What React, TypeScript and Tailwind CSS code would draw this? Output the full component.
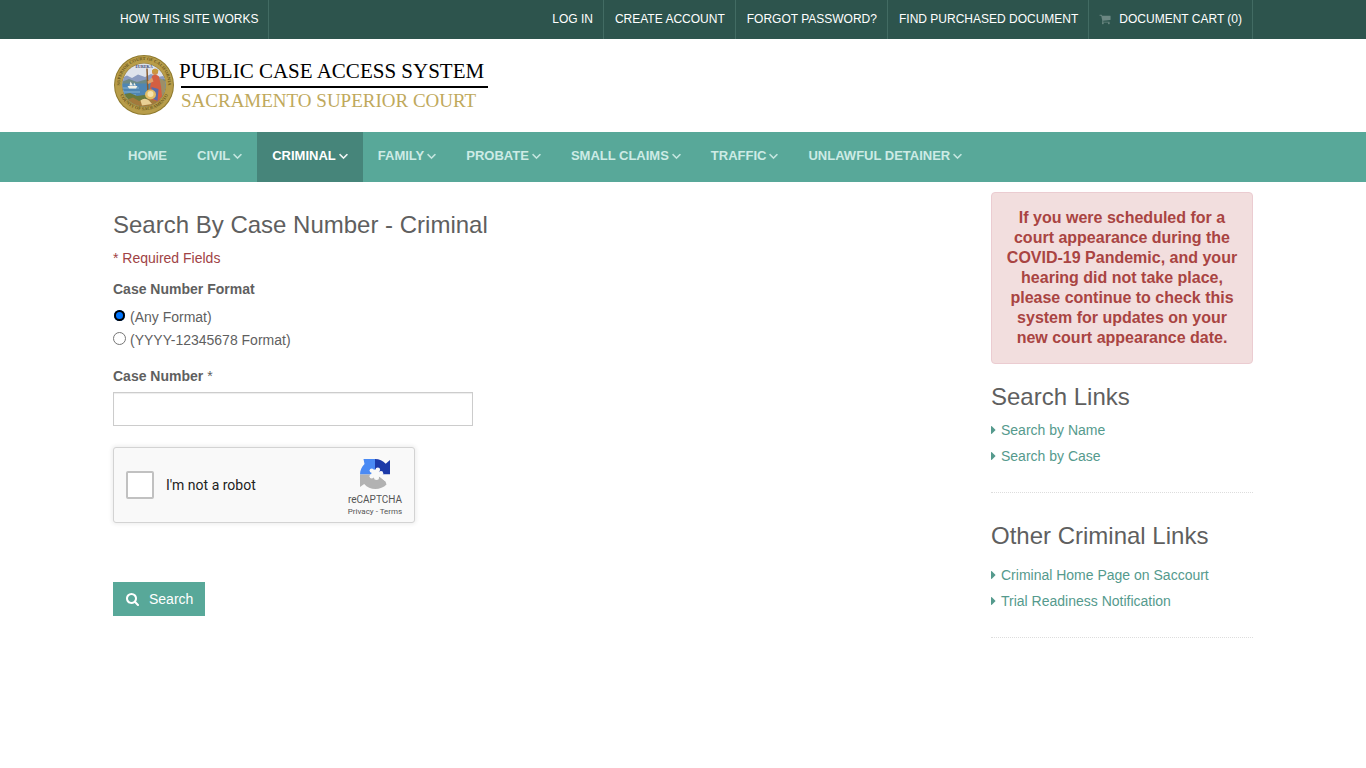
import { useState } from "react";
import { clsx } from "clsx";

const accountLinks = ["LOG IN", "CREATE ACCOUNT", "FORGOT PASSWORD?", "FIND PURCHASED DOCUMENT"];

const navItems = [
  { label: "HOME", menu: false },
  { label: "CIVIL", menu: true },
  { label: "CRIMINAL", menu: true, active: true },
  { label: "FAMILY", menu: true },
  { label: "PROBATE", menu: true },
  { label: "SMALL CLAIMS", menu: true },
  { label: "TRAFFIC", menu: true },
  { label: "UNLAWFUL DETAINER", menu: true },
];

const formats = [
  { id: "any", label: "(Any Format)" },
  { id: "year", label: "(YYYY-12345678 Format)" },
];

const iconPaths = {
  cart: "M704 1536q0 52-38 90t-90 38-90-38-38-90 38-90 90-38 90 38 38 90zm896 0q0 52-38 90t-90 38-90-38-38-90 38-90 90-38 90 38 38 90zm128-1088v512q0 24-16.5 42.5t-40.5 21.5l-1044 122q13 60 13 70 0 16-24 64h920q26 0 45 19t19 45-19 45-45 19h-1024q-26 0-45-19t-19-45q0-11 8-31.5t16-36 21.5-40 15.5-29.5l-177-823h-204q-26 0-45-19t-19-45 19-45 45-19h256q16 0 28.5 6.5t19.5 15.5 13 24.5 8 26 5.5 29.5 4.5 26h1201q26 0 45 19t19 45z",
  search:
    "M1152 832q0-185-131.5-316.5t-316.5-131.5-316.5 131.5-131.5 316.5 131.5 316.5 316.5 131.5 316.5-131.5 131.5-316.5zm512 832q0 52-38 90t-90 38q-54 0-90-38l-343-342q-179 124-399 124-143 0-273.5-55.5t-225-150-150-225-55.5-273.5 55.5-273.5 150-225 225-150 273.5-55.5 273.5 55.5 225 150 150 225 55.5 273.5q0 220-124 399l343 343q37 37 37 90z",
  angleDown:
    "M1395 736q0 13-10 23l-466 466q-10 10-23 10t-23-10l-466-466q-10-10-10-23t10-23l50-50q10-10 23-10t23 10l393 393 393-393q10-10 23-10t23 10l50 50q10 10 10 23z",
  caretRight: "M1152 896q0 26-19 45l-448 448q-19 19-45 19t-45-19-19-45v-896q0-26 19-45t45-19 45 19l448 448q19 19 19 45z",
};

function Icon({
  name,
  className,
  viewBox = "0 0 1792 1792",
}: {
  name: keyof typeof iconPaths;
  className?: string;
  viewBox?: string;
}) {
  return (
    <svg viewBox={viewBox} className={clsx("flex-none", className)} fill="currentColor" aria-hidden="true">
      <path d={iconPaths[name]} />
    </svg>
  );
}

function CourtSeal() {
  return (
    <svg viewBox="0 0 120 120" className="size-[60px] flex-none" role="img" aria-label="Court seal">
      <defs>
        <clipPath id="seal-scene">
          <circle cx="60" cy="60" r="43" />
        </clipPath>
        <path id="seal-top" d="M13 68A48 48 0 1 1 107 68" />
        <path id="seal-bottom" d="M9 72A53 53 0 0 0 111 72" />
      </defs>
      <circle cx="60" cy="60" r="60" fill="#8f7a2e" />
      <circle cx="60" cy="60" r="58" fill="#b89d4a" />
      <circle cx="60" cy="60" r="44" fill="#8d7a3c" />
      <g clipPath="url(#seal-scene)">
        <rect x="10" y="10" width="100" height="100" fill="#dfe3ec" />
        <path d="M14 46l12-5 10 5 12-7 14 5 12-6 14 6 20-4v25H14z" fill="#8b9bc0" />
        <path d="M12 55l18-7 16 6 18-5 18 4 26-7v20H12z" fill="#6d8a86" />
        <rect x="10" y="57" width="100" height="28" fill="#4f86b3" />
        <path d="M10 66h40M16 74h36M20 80h24" stroke="#86b2d0" strokeWidth="2" />
        <path d="M27 62h20l-3 5H30zM33 53l5 8h-7zM40 55l4 6h-5z" fill="#f3f1e6" />
        <path d="M14 80l18-4 14 6 14-2 20-4 28 2v32H14z" fill="#6a7a3c" />
        <path d="M26 90l12-5 12 7 14-4 30 2-12 16H38z" fill="#a37a3b" />
        <path d="M91 46l14 8v34l-14-6z" fill="#9c8f68" />
        <path d="M66 27l2 54" stroke="#8a5a2c" strokeWidth="3" />
        <circle cx="82" cy="34" r="6" fill="#d08d48" />
        <path d="M76 31q6-8 13 0l-2 5-10-1z" fill="#c89a3c" />
        <path d="M76 42q8-5 14 1l4 20 2 20-8 10-14-4-3-18z" fill="#d45f42" />
        <path d="M76 45l-9 8 1 5 11-5z" fill="#e0a06a" />
        <path d="M75 64l14 4-2 24-12-6z" fill="#5a6ca8" />
        <ellipse cx="73" cy="79" rx="11" ry="10" fill="#e3bd66" />
        <ellipse cx="73" cy="78" rx="6" ry="6" fill="#f6e4ac" />
        <path d="M53 91q8-7 17 0l6 7-20 3z" fill="#e8cf94" />
      </g>
      <text x="60" y="26" textAnchor="middle" fontSize="8" className="font-[Liberation_Serif,serif] font-bold" fill="#2e3d6c">
        EUREKA
      </text>
      <g className="font-[Liberation_Serif,serif] font-bold" fontSize="9" fill="#6b5820">
        <text textAnchor="middle">
          <textPath href="#seal-top" startOffset="50%">
            SUPERIOR COURT OF CALIFORNIA
          </textPath>
        </text>
        <text textAnchor="middle">
          <textPath href="#seal-bottom" startOffset="50%">
            COUNTY OF SACRAMENTO
          </textPath>
        </text>
      </g>
    </svg>
  );
}

function RecaptchaLogo() {
  return (
    <svg viewBox="-1 -1 32 32" className="size-8" aria-hidden="true">
      <path fill="#1c3aa9" d="M15 0c4.200 0 8 1.800 10.700 4.800L30 1v14.500H15z" />
      <path fill="#4a8af4" d="M3.500 0H15v15.500H0c0-4.200 1.700-7.800 4.500-10.500z" />
      <path fill="#b2b2b2" d="M0 15.500h15l5 2.500 5.500 4.500 1 3C23.700 28.400 19.600 30 15.500 30c-4.500 0-8.500-1.800-11.300-5L0 28z" />
      <g fill="#f9f9f9">
        <path d="M16 15.500h14.500v8.500L25 22l-5-4z" />
        <circle cx="15.500" cy="14.800" r="4.200" />
        <circle cx="17.800" cy="10.800" r="2.300" />
        <circle cx="11.800" cy="11.600" r="2.200" />
        <circle cx="21" cy="14.300" r="2.200" />
        <circle cx="16.500" cy="18.500" r="2.500" />
        <circle cx="11.700" cy="17.300" r="2.200" />
      </g>
    </svg>
  );
}

function TopBar() {
  return (
    <div className="bg-[#2d544d] text-xs text-white">
      <div className="mx-auto flex max-w-[1140px] justify-between leading-[39px]">
        <a href="#how" className="border-r border-[#426b63] pr-2.5 pl-[7px]">
          HOW THIS SITE WORKS
        </a>
        <nav className="flex" aria-label="Account">
          {accountLinks.map((label) => (
            <a key={label} href="#account" className="border-r border-[#426b63] pr-2.5 pl-[11px]">
              {label}
            </a>
          ))}
          <a href="#cart" className="flex items-center border-r border-[#426b63] px-2.5">
            <Icon name="cart" viewBox="0 128 1792 1792" className="mr-2 size-3 text-[#6b8782]" />
            DOCUMENT CART (0)
          </a>
        </nav>
      </div>
    </div>
  );
}

function MainNav() {
  return (
    <nav className="bg-[#58a899]" aria-label="Main">
      <div className="mx-auto flex max-w-[1140px] text-[13px] leading-[48px] font-bold">
        {navItems.map((item) => (
          <a
            key={item.label}
            href="#nav"
            className={clsx(
              "flex items-center px-[15px] pb-0.5",
              item.active ? "bg-[#46857a] text-white" : "text-[#cdebe5]",
            )}
          >
            {item.label}
            {item.menu && (
              <Icon
                name="angleDown"
                viewBox="352 416 1088 1088"
                className="ml-[3px] size-[9px] stroke-current stroke-[60]"
              />
            )}
          </a>
        ))}
      </div>
    </nav>
  );
}

function Recaptcha() {
  return (
    <div className="flex h-[76px] w-[302px] justify-between rounded-[3px] border border-[#d3d3d3] bg-[#f9f9f9] font-[Roboto,sans-serif] shadow-[0_0_4px_1px_rgba(0,0,0,0.08)]">
      <label className="flex items-center gap-3 pl-3 text-sm text-[#222]">
        <input type="checkbox" className="size-7 appearance-none rounded-[2px] border-2 border-[#c1c1c1] bg-white" />
        I'm not a robot
      </label>
      <div className="flex w-[78px] flex-col items-center pt-[10px] text-[#555]">
        <RecaptchaLogo />
        <div className="mt-1 text-[10px] leading-3">reCAPTCHA</div>
        <div className="text-[8px] leading-3">
          <a href="#privacy">Privacy</a> - <a href="#terms">Terms</a>
        </div>
      </div>
    </div>
  );
}

function SearchForm() {
  const [format, setFormat] = useState("any");

  return (
    <form className="pt-[30px]" onSubmit={(e) => e.preventDefault()}>
      <h1 className="text-2xl leading-[26px]">Search By Case Number - Criminal</h1>
      <p className="mt-2.5 text-[#a04345]">* Required Fields</p>
      <fieldset className="mt-[11px]">
        <legend className="font-bold">Case Number Format</legend>
        <div className="mt-2 space-y-[3px]">
          {formats.map((item) => (
            <label key={item.id} className="flex w-fit items-start gap-1">
              <input
                type="radio"
                name="format"
                checked={format === item.id}
                onChange={() => setFormat(item.id)}
                className="mt-0.5 size-[13px] appearance-none rounded-full border border-[#767676] bg-white checked:border-transparent checked:bg-[#0075ff] checked:bg-clip-padding checked:shadow-[inset_0_0_0_2px_#000]"
              />
              {item.label}
            </label>
          ))}
        </div>
      </fieldset>
      <label htmlFor="case-number" className="mt-4 block font-bold">
        Case Number <span className="font-normal">*</span>
      </label>
      <input
        id="case-number"
        type="text"
        className="mt-1.5 mb-[21px] block h-[34px] w-[360px] border border-[#ccc] px-3 shadow-[inset_0_1px_1px_rgba(0,0,0,0.075)]"
      />
      <Recaptcha />
      <button
        type="submit"
        className="mt-[59px] flex h-[34px] items-center gap-[9px] bg-[#58a899] pr-3 pl-[13px] text-white"
      >
        <Icon name="search" className="size-3.5" />
        Search
      </button>
    </form>
  );
}

function LinkList({ items }: { items: string[] }) {
  return (
    <ul className="mb-[23px] leading-[26px] text-[#559a8d]">
      {items.map((item) => (
        <li key={item}>
          <a href="#link" className="flex items-center gap-[5px]">
            <Icon name="caretRight" viewBox="576 384 640 1024" className="h-2 w-[5px]" />
            {item}
          </a>
        </li>
      ))}
    </ul>
  );
}

function Sidebar() {
  return (
    <aside className="w-[262px] flex-none pt-2.5">
      <div
        role="alert"
        className="rounded-[4px] border border-[#ebccd1] bg-[#f2dede] px-3.5 py-[15px] text-center text-base leading-5 font-bold text-[#a94442]"
      >
        If you were scheduled for a court appearance during the COVID-19 Pandemic, and your hearing did not take
        place, please continue to check this system for updates on your new court appearance date.
      </div>
      <h2 className="mt-5 mb-[7px] text-2xl leading-[26px]">Search Links</h2>
      <LinkList items={["Search by Name", "Search by Case"]} />
      <hr className="border-dotted border-[#ddd]" />
      <h2 className="mt-[30px] mb-[13px] text-2xl leading-[26px]">Other Criminal Links</h2>
      <LinkList items={["Criminal Home Page on Saccourt", "Trial Readiness Notification"]} />
      <hr className="border-dotted border-[#ddd]" />
    </aside>
  );
}

export default function App() {
  return (
    <div className="min-h-screen bg-white font-[Liberation_Sans,Arial,sans-serif] text-sm text-[#5f5f5f]">
      <TopBar />
      <header className="mx-auto max-w-[1140px] pt-4 pb-[17px]">
        <a href="#home" className="flex w-fit items-center gap-[5px] pl-px font-[Liberation_Serif,serif]">
          <CourtSeal />
          <div>
            <div className="text-[21px] leading-[30px] text-black">PUBLIC CASE ACCESS SYSTEM</div>
            <div className="ml-0.5 w-[307px] border-t-2 border-black text-[19px] leading-[26px] text-[#bfa95c]">
              SACRAMENTO SUPERIOR COURT
            </div>
          </div>
        </a>
      </header>
      <MainNav />
      <main className="mx-auto flex max-w-[1140px] justify-between gap-[30px] leading-5">
        <SearchForm />
        <Sidebar />
      </main>
    </div>
  );
}
